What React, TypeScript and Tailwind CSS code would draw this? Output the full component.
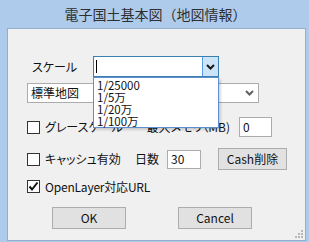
const Chevron = ({ color }: { color: string }) => (
    <svg width="9" height="6" viewBox="0 0 9 6">
        <path d="M1 1 L4.5 4.5 L8 1" fill="none" stroke={color} strokeWidth="2" />
    </svg>
);

function CheckBox({ checked = false }: { checked?: boolean }) {
    return (
        <div className="w-[13px] h-[13px] border border-[#333333] bg-white flex items-center justify-center shrink-0">
            {checked && (
                <svg width="11" height="11" viewBox="0 0 11 11">
                    <path d="M1.5 5.5 L4 8.5 L9.5 1.5" fill="none" stroke="#111" strokeWidth="2" />
                </svg>
            )}
        </div>
    );
}

function Grip() {
    const dots = [
        [6, 0],
        [3, 3], [6, 3],
        [0, 6], [3, 6], [6, 6],
    ];
    return (
        <svg width="9" height="9" viewBox="0 0 9 9" className="absolute right-[1px] bottom-[1px]">
            {dots.map(([x, y]) => (
                <rect key={`${x}-${y}`} x={x} y={y} width="2" height="2" fill="#b9b9b9" />
            ))}
        </svg>
    );
}

export default function App() {
    const scales = ['1/25000', '1/5万', '1/20万', '1/100万'];

    return (
        <div className="w-[309px] h-[242px] bg-[#aecbeb] flex flex-col font-['Noto_Sans_CJK_JP',sans-serif] text-[12px] leading-none text-[#111] select-none [font-feature-settings:'palt']">
            <div className="h-[28px] flex items-center justify-center pl-[2px] text-[14px] text-[#2e2e2e] [font-feature-settings:normal]">
                電子国土基本図（地図情報）
            </div>
            <div className="ml-[7px] mr-[3px] h-[213px] border border-[#93afcf] bg-[#f0f0f0] relative flex flex-col">
                {/* scale */}
                <div className="mt-[27px] h-[21px] flex items-center">
                    <span className="w-[85px] pl-[24px]">スケール</span>
                    <div className="relative w-[126px] h-[21px] border border-[#3c7fb1] bg-white flex">
                        <div className="flex-1 flex items-center pl-[2px]">
                            <div className="w-[1px] h-[13px] bg-black" />
                        </div>
                        <div className="w-[16px] h-full bg-[#cce4f7] border-l border-[#569de5] flex items-center justify-center">
                            <Chevron color="#1a1a1a" />
                        </div>
                        <div className="absolute left-[-1px] top-[20px] w-[126px] pt-[1px] border border-[#5f8fcc] bg-white z-10 shadow-[2px_2px_2px_rgba(0,0,0,0.15)]">
                            {scales.map((s) => (
                                <div key={s} className="h-[12px] leading-[12px] pl-[3px] text-[11.5px]">{s}</div>
                            ))}
                        </div>
                    </div>
                </div>

                {/* map type */}
                <div className="mt-[6px] h-[20px] flex">
                    <div className="ml-[19px] w-[232px] h-[20px] border border-[#acacac] bg-white flex items-center">
                        <span className="flex-1 pl-[3px]">標準地図</span>
                        <div className="w-[17px] flex justify-center">
                            <Chevron color="#606060" />
                        </div>
                    </div>
                </div>

                {/* grayscale / memory */}
                <div className="mt-[14px] h-[20px] flex items-center pl-[19px]">
                    <div className="w-[108px] flex items-center gap-[5px]">
                        <CheckBox />
                        <span>グレースケール</span>
                    </div>
                    <span className="w-[95px] text-right whitespace-nowrap">最大メモリ（MB)</span>
                    <div className="ml-[9px] w-[33px] h-[20px] border border-[#acacac] bg-white flex items-center pl-[3px]">0</div>
                </div>

                {/* cache */}
                <div className="mt-[11px] h-[22px] flex items-center pl-[19px]">
                    <div className="w-[108px] flex items-center gap-[5px]">
                        <CheckBox />
                        <span>キャッシュ有効</span>
                    </div>
                    <span className="w-[32px]">日数</span>
                    <div className="w-[34px] h-[19px] border border-[#acacac] bg-white flex items-center pl-[3px]">30</div>
                    <button className="ml-[17px] w-[69px] h-[22px] border border-[#adadad] bg-[#e1e1e1] flex items-center justify-center">
                        Cash削除
                    </button>
                </div>

                {/* openlayer */}
                <div className="mt-[10px] h-[13px] flex items-center gap-[5px] pl-[19px]">
                    <CheckBox checked />
                    <span className="tracking-[-0.2px]">OpenLayer対応URL</span>
                </div>

                {/* buttons */}
                <div className="mt-[14px] h-[22px] flex pl-[44px] gap-[52px]">
                    <button className="w-[74px] h-[22px] border border-[#adadad] bg-[#e1e1e1] flex items-center justify-center">OK</button>
                    <button className="w-[74px] h-[22px] border border-[#adadad] bg-[#e1e1e1] flex items-center justify-center">Cancel</button>
                </div>

                <Grip />
            </div>
        </div>
    );
}
